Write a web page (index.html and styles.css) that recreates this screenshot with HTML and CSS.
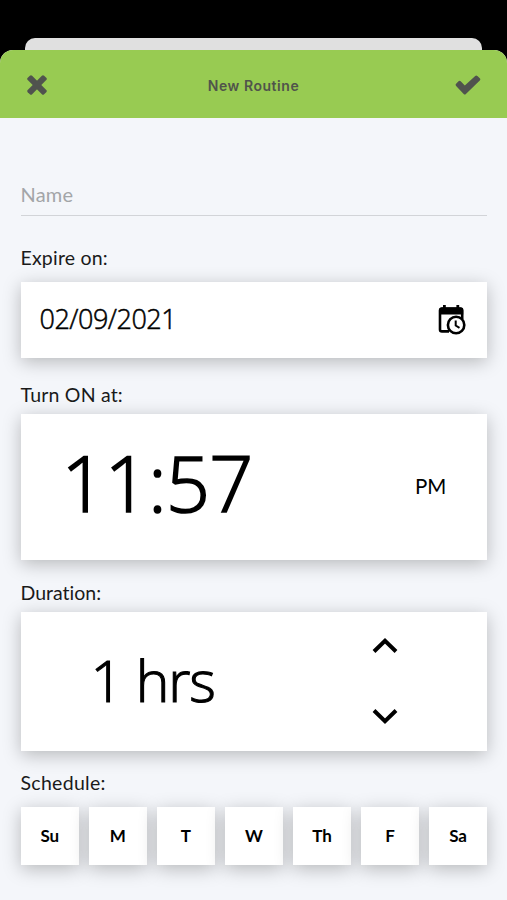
FILE: index.html
```html
<!DOCTYPE html>
<html lang="en">
<head>
<meta charset="utf-8">
<title>New Routine</title>
<link rel="stylesheet" href="styles.css">
</head>
<body>
<div class="sheet-behind"></div>
<div class="sheet">
  <header class="bar">
    <svg class="close" viewBox="0 0 20 20">
      <g transform="rotate(45 10 10)"><rect x="-1.6" y="6.9" width="23.2" height="6.2" rx="1.6"/><rect x="6.9" y="-1.6" width="6.2" height="23.2" rx="1.6"/></g>
    </svg>
    <h1 class="title">New Routine</h1>
    <svg class="check" viewBox="0 0 26 20">
      <path d="M1.1 8.7 3.5 6.3Q4.6 5.3 5.7 6.3L9.8 10.5 20.2.9Q21.3-.1 22.4.9L24.8 3.3Q25.8 4.4 24.8 5.4L10.9 19Q9.8 20 8.7 19L1.1 10.9Q.1 9.8 1.1 8.7Z"/>
    </svg>
  </header>
  <main class="form">
    <div class="name">Name</div>
    <div class="label label-date">Expire on:</div>
    <section class="card date">
      <span class="date-value">02/09/2021</span>
      <svg class="calendar" viewBox="0 0 28 30">
        <path class="line" d="M11 26.4H4a2 2 0 0 1-2-2V5.6a2 2 0 0 1 2-2H22.2a2 2 0 0 1 2 2V14"/>
        <path d="M1 9.5V5a2.4 2.4 0 0 1 2.4-2.4H5V0h2.8v2.6h10.6V0h2.8v2.6h1.6A2.4 2.4 0 0 1 25.2 5v4.5Z"/>
        <circle class="face" cx="18.1" cy="20" r="8.2"/>
        <path class="hand" d="M17.7 15.5v5l3.8 2.3"/>
      </svg>
    </section>
    <div class="label label-time">Turn ON at:</div>
    <section class="card time">
      <span class="time-value">11:57</span>
      <span class="meridiem">PM</span>
    </section>
    <div class="label label-duration">Duration:</div>
    <section class="card duration">
      <span class="duration-value">1 hrs</span>
      <div class="stepper">
        <svg class="chevron" viewBox="0 0 26 16"><path d="M2 13.5 13 2.8 24 13.5"/></svg>
        <svg class="chevron" viewBox="0 0 26 16"><path d="M2 2.5 13 13.2 24 2.5"/></svg>
      </div>
    </section>
    <div class="label label-days">Schedule:</div>
    <div class="days">
      <div class="day">Su</div><div class="day">M</div><div class="day">T</div><div class="day">W</div><div class="day">Th</div><div class="day">F</div><div class="day">Sa</div>
    </div>
  </main>
</div>
</body>
</html>
```
FILE: styles.css
```css
* { box-sizing: border-box; }
body {
  margin: 0;
  height: 900px;
  overflow: hidden;
  background: #000;
  color: #1a1a1a;
  font-family: Lato, "Liberation Sans", sans-serif;
  font-variant-ligatures: none;
  padding-top: 38px;
}
.sheet-behind {
  height: 12px;
  margin: 0 25px 0 25px;
  border-radius: 10px 10px 0 0;
  background: #e0e0e0;
}
.sheet {
  height: 850px;
  border-radius: 13px 13px 0 0;
  background: #f4f6fa;
  overflow: hidden;
}
.bar {
  height: 68.4px;
  padding: 2px 26px 0 27px;
  display: flex;
  align-items: center;
  justify-content: space-between;
  background: #98cb52;
}
.bar svg { fill: #50534e; }
.close { width: 20px; height: 20px; }
.check { width: 26px; height: 20px; margin-top: -1px; }
.title {
  margin: 2px 0 0 5px;
  font: 600 14px/20px Inter, sans-serif;
  letter-spacing: 0.55px;
  color: #50544b;
}
.form { padding: 59.6px 19.6px 0 20.5px; }
.name {
  height: 38px;
  font-size: 20px;
  line-height: 32px;
  color: #a3a5a8;
  letter-spacing: 0.2px;
  border-bottom: 1px solid #d2d4d8;
}
.label { font-size: 19.5px; line-height: 24px; white-space: nowrap; letter-spacing: 0.2px; }
.label-date { margin-top: 30px; }
.label-time { margin-top: 25px; }
.label-duration { margin-top: 21px; letter-spacing: 0; }
.label-days { margin-top: 20px; letter-spacing: 0.3px; }
.card, .day {
  background: #fff;
  box-shadow: 0 4px 17px rgba(0, 0, 0, 0.25);
}
.card {
  display: flex;
  align-items: center;
  justify-content: space-between;
  font-family: "Open Sans", "Noto Sans", sans-serif;
  color: #000;
}
.date { height: 76px; margin-top: 12px; padding: 0 21px 2px 19px; }
.date-value {
  font-size: 27px;
  line-height: 36px;
  letter-spacing: -0.5px;
  font-weight: 300;
  -webkit-text-stroke: 0.5px #000;
}
.calendar { width: 28px; height: 30px; margin-top: 2px; }
.calendar .line { fill: none; stroke: #000; stroke-width: 2.6; }
.calendar .face { fill: #fff; stroke: #000; stroke-width: 2.6; }
.calendar .hand { fill: none; stroke: #000; stroke-width: 2; }
.time { height: 146px; margin-top: 7px; padding: 0 41px 2px 41px; }
.time-value {
  font-size: 77px;
  line-height: 100px;
  letter-spacing: -0.6px;
  margin-top: -5px;
  font-weight: 300;
  -webkit-text-stroke: 1.7px #000;
}
.meridiem { font-family: Lato, sans-serif; font-size: 20.5px; margin-top: 1px; }
.duration { height: 139px; margin-top: 7px; padding: 0 89.5px 0 70px; }
.duration-value {
  font-size: 57px;
  line-height: 70px;
  margin-top: -3px;
  letter-spacing: -1.1px;
  font-weight: 300;
  -webkit-text-stroke: 1.1px #000;
}
.stepper { display: flex; flex-direction: column; gap: 54px; }
.chevron { display: block; width: 26px; height: 16px; fill: none; stroke: #000; stroke-width: 4; }
.days { display: grid; grid-template-columns: repeat(7, 1fr); gap: 9.4px; margin-top: 12px; }
.day {
  height: 58.5px;
  padding-bottom: 2px;
  display: flex;
  align-items: center;
  justify-content: center;
  color: #000;
  font-size: 17px;
  font-weight: 700;
}
```
